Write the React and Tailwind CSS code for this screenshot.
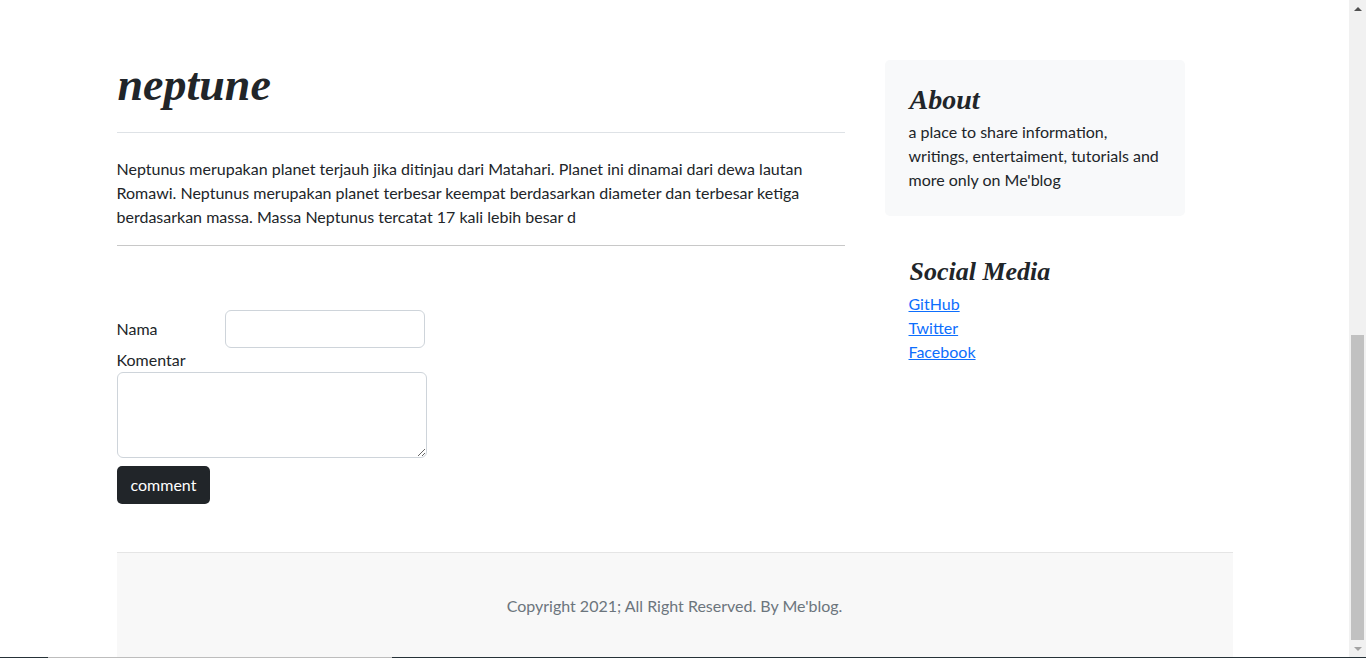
import React from 'react'

const serif = "font-['Liberation_Serif',serif]"

const Sidebar = () => {
    return (
        <div className="w-[300px] shrink-0">
            {/* About */}
            <div className="bg-[#f8f9fa] rounded-[5px] p-6">
                <h4 className={`${serif} italic font-bold text-[28px] leading-[32px] text-[#212529] mb-[4px] pl-px`}>About</h4>
                <p className="text-[16px] leading-6 text-[#212529]">
                    a place to share information, writings, entertaiment, tutorials and more only on Me'blog
                </p>
            </div>

            {/* Social Media */}
            <div className="px-6 pt-[40px]">
                <h4 className={`${serif} italic font-bold text-[26px] leading-[32px] text-[#212529] mb-[4px] pl-px`}>Social Media</h4>
                <ol className="flex flex-col text-[16px] leading-6">
                    <li><a href="#" className="text-[#0d6efd] underline">GitHub</a></li>
                    <li><a href="#" className="text-[#0d6efd] underline">Twitter</a></li>
                    <li><a href="#" className="text-[#0d6efd] underline">Facebook</a></li>
                </ol>
            </div>
        </div>
    )
}

const CommentForm = () => {
    return (
        <form className="pt-[64px]" onSubmit={(e) => e.preventDefault()}>
            <div className="flex items-center">
                <label className="w-[108px] text-[16px] leading-6">Nama</label>
                <input
                    type="text"
                    className="w-[200px] h-[38px] border border-[#ced4da] rounded-[6px] px-3 bg-white outline-none"
                />
            </div>
            <label className="block text-[16px] leading-6">Komentar</label>
            <textarea className="block w-[310px] h-[86px] border border-[#ced4da] rounded-[6px] px-3 py-1.5 bg-white outline-none" />
            <button
                type="submit"
                className="mt-2 h-[38px] px-[14px] bg-[#212529] text-white text-[16px] leading-6 rounded-[5px]"
            >
                comment
            </button>
        </form>
    )
}

const Scrollbar = () => {
    return (
        <div className="w-[17px] shrink-0 bg-[#f1f1f1] flex flex-col items-center">
            <div className="h-[17px] w-full flex items-center justify-center">
                <div className="w-0 h-0 border-l-[4px] border-r-[4px] border-b-[4px] border-l-transparent border-r-transparent border-b-[#505050]" />
            </div>
            <div className="flex-1 w-full px-[2px] flex flex-col justify-end">
                <div className="h-[305px] bg-[#c1c1c1]" />
            </div>
            <div className="h-[17px] w-full flex items-center justify-center">
                <div className="w-0 h-0 border-l-[4px] border-r-[4px] border-t-[4px] border-l-transparent border-r-transparent border-t-[#a3a3a3]" />
            </div>
        </div>
    )
}

export default function App() {
    return (
        <div className="h-[658px] flex flex-col bg-white text-[#212529] font-['Lato',sans-serif] overflow-hidden">
            <div className="flex flex-1 min-h-0">
                <div className="flex-1 min-w-0 flex flex-col">
                    <div className="w-[1116px] mx-auto flex flex-col flex-1">
                        <div className="flex gap-10 pt-[60px]">
                            {/* Main post */}
                            <div className="w-[728px] shrink-0">
                                <h1 className={`${serif} italic font-bold text-[46px] leading-[50px] text-[#212529] mb-[22px] pl-px`}>neptune</h1>
                                <hr className="border-t border-[#dee2e6]" />
                                <p className="mt-6 mb-4 text-[16px] leading-6">
                                    Neptunus merupakan planet terjauh jika ditinjau dari Matahari. Planet ini dinamai dari dewa lautan Romawi. Neptunus merupakan planet terbesar keempat berdasarkan diameter dan terbesar ketiga berdasarkan massa. Massa Neptunus tercatat 17 kali lebih besar d
                                </p>
                                <hr className="border-t border-[#c8c8c8]" />
                                <CommentForm />
                            </div>
                            <Sidebar />
                        </div>

                        {/* Footer */}
                        <footer className="mt-12 flex-1 bg-[#f8f8f8] border-t border-[#e5e5e5] pt-[41px] text-center">
                            <p className="text-[16px] leading-6 text-[#6c757d]">Copyright 2021; All Right Reserved. By Me'blog.</p>
                        </footer>
                    </div>
                </div>
                <Scrollbar />
            </div>
            <div className="h-px flex shrink-0">
                <div className="w-[48px] bg-[#263238]" />
                <div className="w-[344px] bg-[#bdbdbd]" />
                <div className="flex-1 bg-[#263238]" />
            </div>
        </div>
    )
}
